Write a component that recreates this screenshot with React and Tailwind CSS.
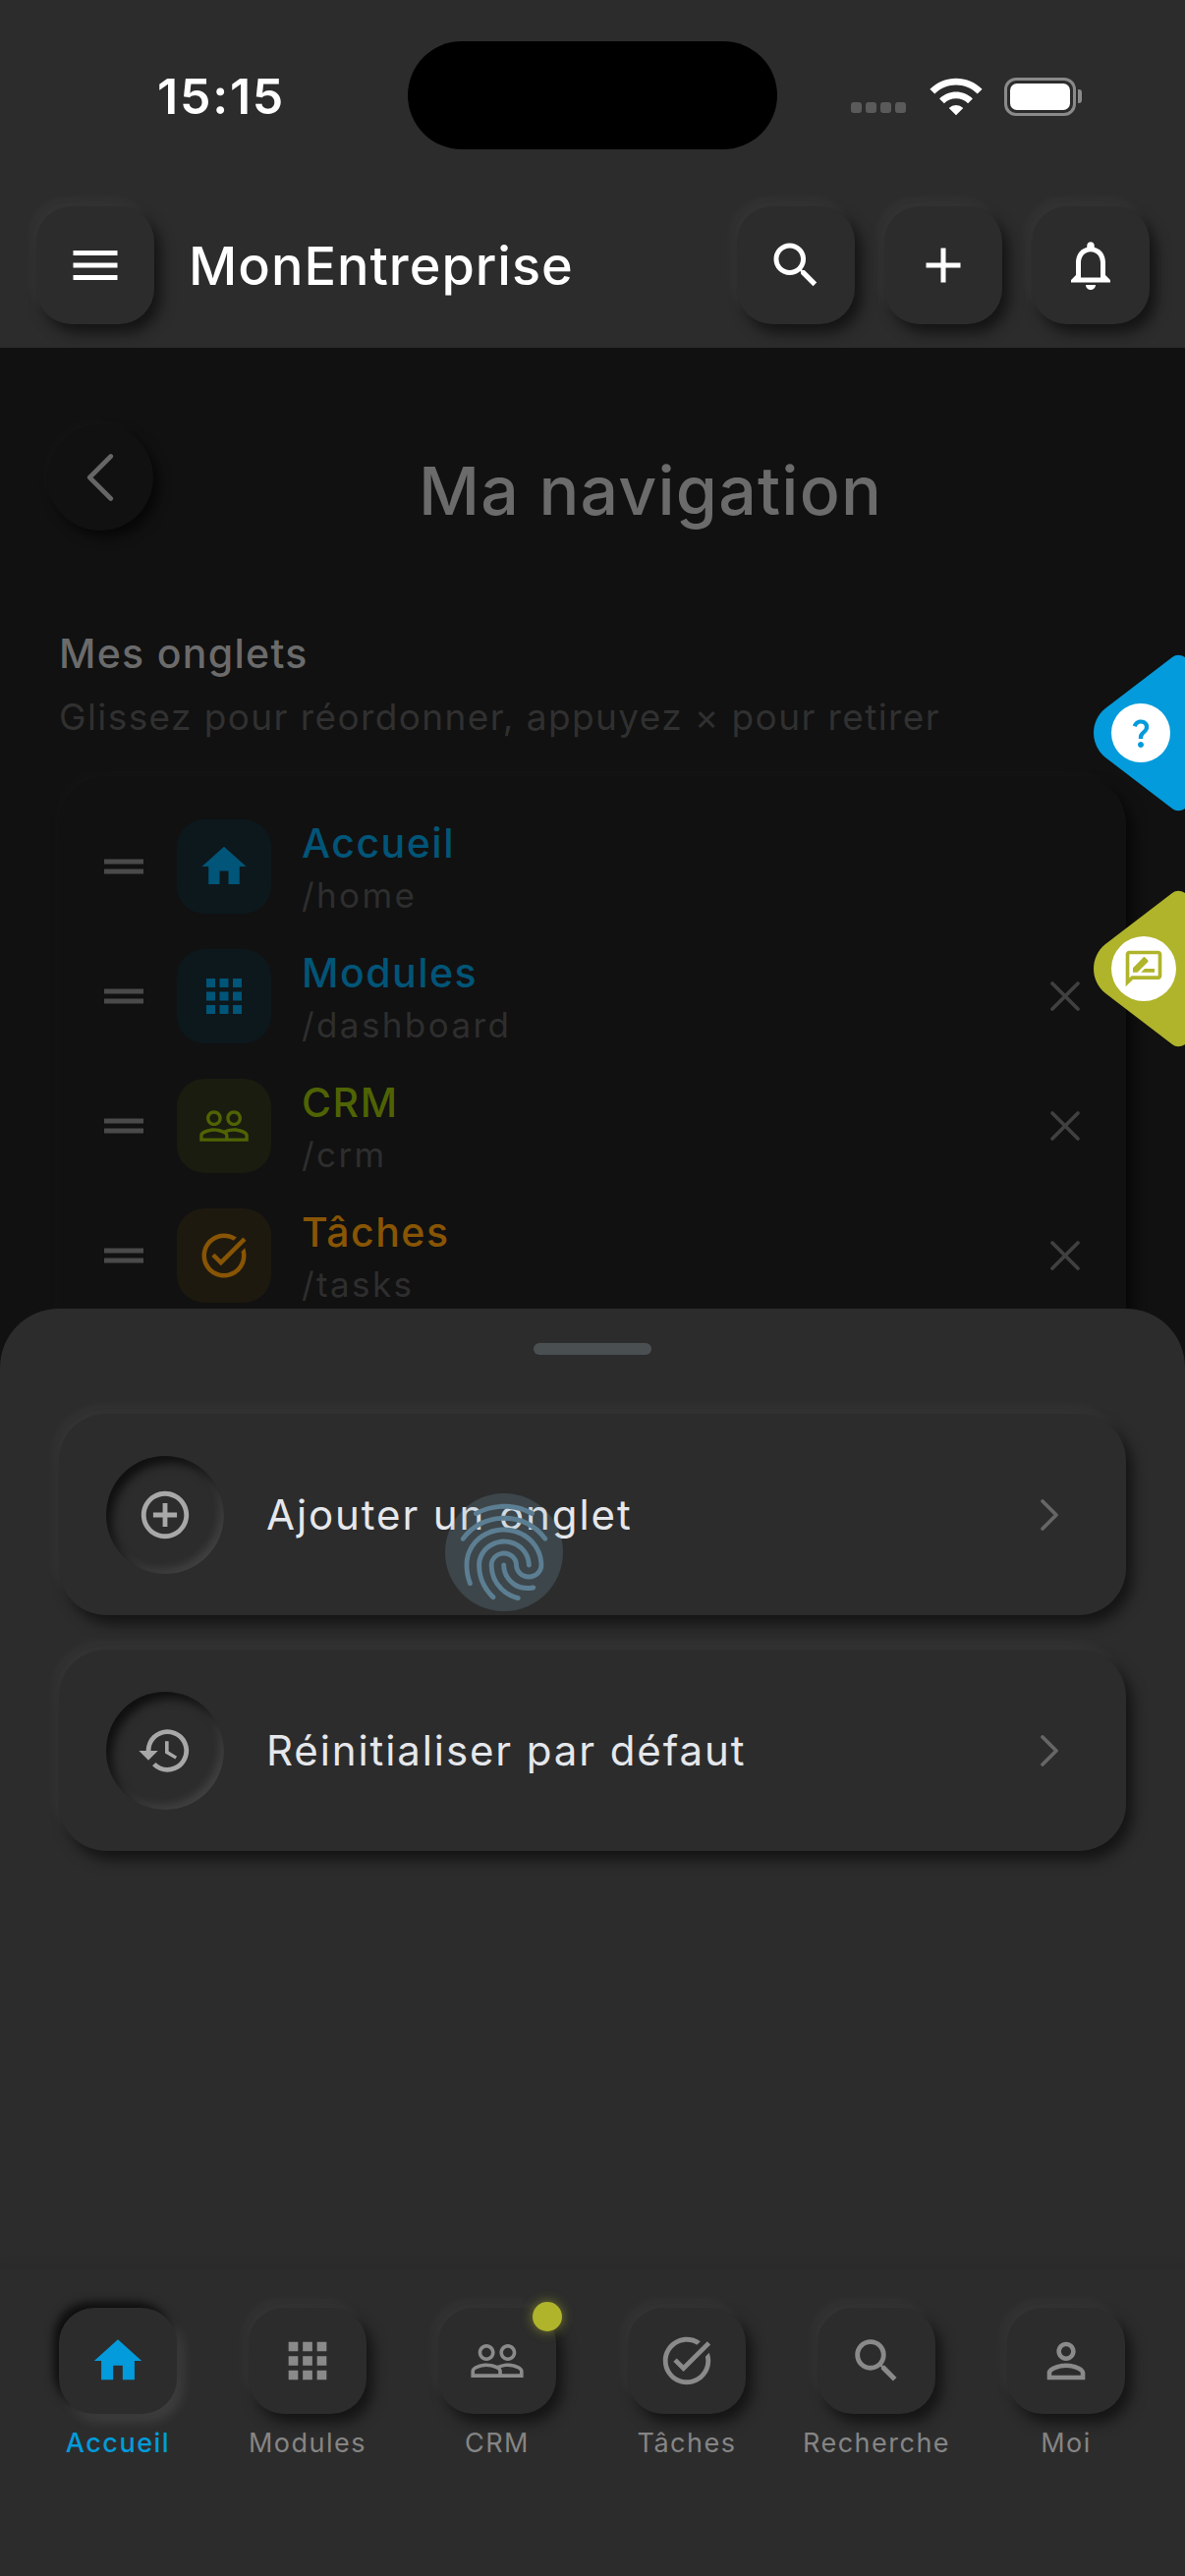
import React from 'react';
import {
  MdMenu, MdSearch, MdAdd, MdNotificationsNone, MdHome, MdApps, MdPeopleOutline,
  MdOutlineTaskAlt, MdPersonOutline, MdControlPoint, MdHistory,
  MdFingerprint, MdQuestionMark, MdOutlineRateReview, MdDragHandle, MdWifi,
} from 'react-icons/md';
import { ChevronLeft, ChevronRight, X } from 'lucide-react';

const raised = 'shadow-[-5px_-7px_12px_rgba(255,255,255,0.045),7px_9px_14px_rgba(0,0,0,0.55)]';

const tabs = [
  { name: 'Accueil', path: '/home', Icon: MdHome, text: 'text-[#015578]', box: 'bg-[#0d181d]', fixed: true },
  { name: 'Modules', path: '/dashboard', Icon: MdApps, text: 'text-[#015578]', box: 'bg-[#0d181d]' },
  { name: 'CRM', path: '/crm', Icon: MdPeopleOutline, text: 'text-[#4f6304]', box: 'bg-[#191c0f]' },
  { name: 'Tâches', path: '/tasks', Icon: MdOutlineTaskAlt, text: 'text-[#885504]', box: 'bg-[#1e190f]' },
];

const navItems = [
  { label: 'Accueil', Icon: MdHome, active: true },
  { label: 'Modules', Icon: MdApps },
  { label: 'CRM', Icon: MdPeopleOutline, badge: true },
  { label: 'Tâches', Icon: MdOutlineTaskAlt },
  { label: 'Recherche', Icon: MdSearch },
  { label: 'Moi', Icon: MdPersonOutline },
];

function HeaderButton({ Icon }) {
  return (
    <button className={`w-[120px] h-[120px] rounded-[36px] bg-[#2c2c2c] flex items-center justify-center text-white ${raised}`}>
      <Icon size={60} />
    </button>
  );
}

function TabRow({ tab }) {
  const { Icon } = tab;
  return (
    <div className="h-[96px] flex items-center">
      <MdDragHandle size={60} className="text-[#4a4a4a] ml-[36px]" />
      <div className={`w-[96px] h-[96px] ml-[24px] rounded-[28px] flex items-center justify-center ${tab.box} ${tab.text}`}>
        <Icon size={54} />
      </div>
      <div className="ml-[31px] flex-1 pt-[2px]">
        <div className={`text-[41px] leading-[50px] tracking-[1.5px] font-medium ${tab.text}`}>{tab.name}</div>
        <div className="text-[35px] leading-[44px] tracking-[2.4px] text-[#2e2e2e] mt-[6px]">{tab.path}</div>
      </div>
      {!tab.fixed && <X size={52} strokeWidth={1.7} className="text-[#404040] mr-[36px]" />}
    </div>
  );
}

function SheetAction({ Icon, label }) {
  return (
    <div className={`h-[205px] rounded-[48px] bg-[#2c2c2c] flex items-center pl-[48px] pr-[50px] ${raised}`}>
      <div className="w-[120px] h-[120px] rounded-full bg-[#2c2c2c] flex items-center justify-center text-[#a8a8a8] shadow-[inset_6px_7px_10px_rgba(0,0,0,0.65),inset_-4px_-5px_8px_rgba(255,255,255,0.1)]">
        <Icon size={58} />
      </div>
      <div className="ml-[43px] flex-1 text-[42px] tracking-[1.9px] text-[#e5e7eb]">{label}</div>
      <ChevronRight size={56} strokeWidth={1.6} className="text-[#666666]" />
    </div>
  );
}

function SideTab({ color, circle, children }) {
  return (
    <div className="relative w-[93px] h-[160px]">
      <svg width="93" height="160" viewBox="0 0 93 160" className="absolute inset-0">
        <path d="M93 3 C88 0 84 0 80 3 L12 55 C-4 68 -4 92 12 105 L80 157 C84 160 88 160 93 157 Z" fill={color} />
      </svg>
      <div className={`absolute left-[18px] top-1/2 -translate-y-1/2 rounded-full bg-white flex items-center justify-center ${circle}`}>
        {children}
      </div>
    </div>
  );
}

export default function App() {
  return (
    <div className="w-[1206px] h-[2622px] bg-[#2c2c2c] flex flex-col overflow-hidden font-['Inter','Noto_Sans',sans-serif]">
      {/* status bar + app bar */}
      <div className="h-[354px] bg-[#2c2c2c] flex flex-col shrink-0">
        <div className="h-[210px] relative">
          <div className="absolute left-[415px] top-[42px] w-[376px] h-[110px] rounded-full bg-black" />
          <div className="absolute left-[160px] top-[68px] text-[50px] leading-[60px] tracking-[1.8px] font-semibold text-white">15:15</div>
          <div className="absolute right-[105px] top-[74px] h-[48px] flex items-center gap-[22px]">
            <div className="flex gap-[4px] mt-[22px]">
              {[0, 1, 2, 3].map((i) => <div key={i} className="w-[11px] h-[11px] rounded-[3px] bg-[#5a5a5a]" />)}
            </div>
            <MdWifi size={58} className="text-white" />
            <div className="flex items-center -ml-[2px]">
              <div className="w-[73px] h-[39px] rounded-[12px] border-[3px] border-[#8a8a8a] p-[3px]">
                <div className="w-full h-full rounded-[7px] bg-white" />
              </div>
              <div className="w-[4px] h-[14px] rounded-r-[3px] bg-[#8a8a8a] ml-[2px]" />
            </div>
          </div>
        </div>
        <div className="flex items-center pl-[37px] pr-[36px]">
          <HeaderButton Icon={MdMenu} />
          <div className="ml-[35px] flex-1 text-[54px] tracking-[1px] font-medium text-white">MonEntreprise</div>
          <div className="flex gap-[30px]">
            <HeaderButton Icon={MdSearch} />
            <HeaderButton Icon={MdAdd} />
            <HeaderButton Icon={MdNotificationsNone} />
          </div>
        </div>
      </div>

      {/* dimmed page behind the sheet */}
      <div className="flex-1 relative bg-[#111111] overflow-hidden">
        <div className="pt-[78px] pl-[48px] flex items-center">
          <div className="w-[108px] h-[108px] rounded-full bg-[#111111] flex items-center justify-center text-[#666666] shadow-[-4px_-5px_10px_rgba(255,255,255,0.02),6px_7px_12px_rgba(0,0,0,0.6)]">
            <ChevronLeft size={86} strokeWidth={1.3} />
          </div>
          <div className="ml-[270px] mt-[26px] text-[68px] leading-[80px] tracking-[1.2px] font-medium text-[#6b6b6b]">Ma navigation</div>
        </div>
        <div className="mt-[100px] pl-[60px]">
          <div className="text-[41px] leading-[50px] tracking-[1.3px] font-medium text-[#6b6b6b]">Mes onglets</div>
          <div className="mt-[18px] text-[37px] leading-[44px] tracking-[1.4px] text-[#303030]">Glissez pour réordonner, appuyez × pour retirer</div>
        </div>
        <div className="mt-[38px] ml-[60px] w-[1086px] h-[600px] rounded-[48px] bg-[#111111] pt-[44px] flex flex-col gap-[36px] shadow-[-4px_-6px_12px_rgba(255,255,255,0.02),7px_9px_14px_rgba(0,0,0,0.6)]">
          {tabs.map((tab) => <TabRow key={tab.path} tab={tab} />)}
        </div>

        {/* floating side tabs */}
        <div className="absolute right-0 top-[312px] flex flex-col gap-[80px]">
          <SideTab color="#039bdb" circle="w-[60px] h-[60px]">
            <MdQuestionMark size={36} className="text-[#039bdb]" />
          </SideTab>
          <SideTab color="#afb42b" circle="w-[66px] h-[66px]">
            <MdOutlineRateReview size={44} className="text-[#afb42b]" />
          </SideTab>
        </div>

        {/* bottom sheet */}
        <div className="absolute left-0 right-0 bottom-0 h-[978px] rounded-t-[60px] bg-[#2c2c2c] px-[60px]">
          <div className="w-[120px] h-[12px] rounded-full bg-[#4a4f52] mx-auto mt-[35px]" />
          <div className="mt-[60px] flex flex-col gap-[35px]">
            <SheetAction Icon={MdControlPoint} label="Ajouter un onglet" />
            <SheetAction Icon={MdHistory} label="Réinitialiser par défaut" />
          </div>
        </div>

        {/* touch indicator */}
        <div className="absolute left-[453px] top-[1166px] w-[120px] h-[120px] rounded-full bg-[rgba(130,175,195,0.2)] flex items-center justify-center">
          <MdFingerprint size={118} className="text-[#5c7e92]" />
        </div>
      </div>

      {/* bottom nav */}
      <div className="h-[312px] shrink-0 bg-[#2c2c2c] pt-[39px] pl-[60px] flex gap-[73px] shadow-[0_-6px_10px_rgba(0,0,0,0.06)] z-10">
        {navItems.map(({ label, Icon, active, badge }) => (
          <div key={label} className="w-[120px] flex flex-col items-center">
            <div className={`relative w-[120px] h-[108px] rounded-[36px] bg-[#2c2c2c] flex items-center justify-center ${active ? 'text-[#039bdb] shadow-[-5px_-6px_10px_rgba(0,0,0,0.7),6px_8px_12px_rgba(255,255,255,0.09)]' : `text-[#8a8a8a] ${raised}`}`}>
              <Icon size={58} />
              {badge && <div className="absolute -top-[6px] right-[-6px] w-[30px] h-[30px] rounded-full bg-[#afb42b] shadow-[0_0_12px_rgba(175,180,43,0.6)]" />}
            </div>
            <div className={`mt-[12px] text-[27px] leading-[36px] whitespace-nowrap tracking-[1.5px] ${active ? 'text-[#039bdb] font-medium' : 'text-[#858585]'}`}>{label}</div>
          </div>
        ))}
      </div>
    </div>
  );
}
